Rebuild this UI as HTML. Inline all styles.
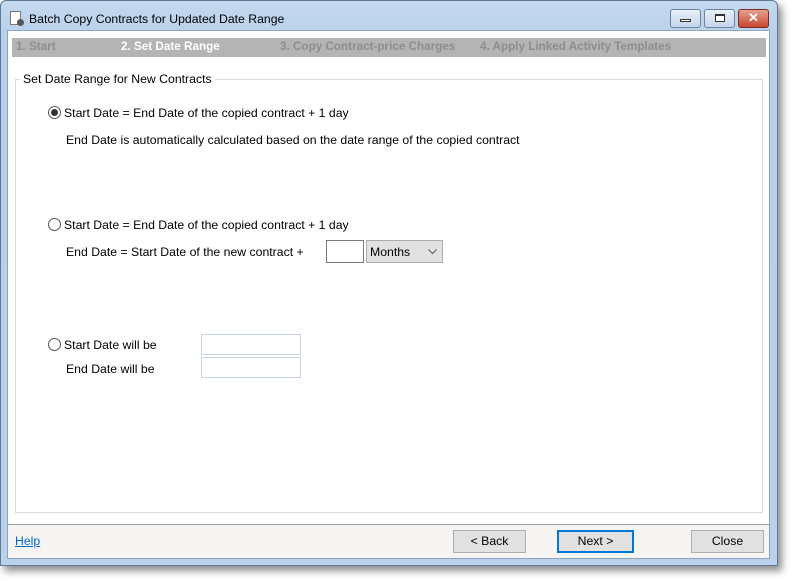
<!DOCTYPE html>
<html><head><style>
*{margin:0;padding:0;box-sizing:border-box}
body{width:795px;height:581px;background:#fff;font-family:"Liberation Sans",Arial,sans-serif;font-size:12.25px;color:#000;position:relative;overflow:hidden}
.abs{position:absolute}
.win{left:0;top:0;width:778px;height:566px;background:linear-gradient(#c5d9ef,#b6cfea 40px,#b9d1ea);border:1px solid #5e7a99;border-radius:6px 6px 0 0;box-shadow:4px 5px 8px rgba(0,0,0,.45)}
.client{left:7px;top:30px;width:763px;height:529px;background:#fff;border:1px solid #8ea5bf}
.steps{left:12px;top:38px;width:754px;height:19px;background:#b4b4b4;font-weight:bold;font-size:11.7px;color:#8d8d8d}
.steps span{position:absolute;top:2px}
.radio{width:13px;height:13px;border:1px solid #555;border-radius:50%;background:#fff}
.inp{border:1px solid #c6d3e3;background:#fff}
.btn{border:1px solid #adadad;background:#e1e1e1;text-align:center;line-height:21px;font-size:12.25px}
.wb{top:9px;height:19px;border:1px solid #6d83a0;border-radius:3px;background:linear-gradient(#e8f0f8,#c4d5ea)}
</style></head><body>
<div class="abs win"></div>
<div class="abs" style="left:10px;top:11px;width:11px;height:14px;border:1px solid #777;background:#fff"></div>
<div class="abs" style="left:17px;top:19px;width:7px;height:7px;border-radius:50%;background:#555"></div>
<div class="abs" style="left:29px;top:12px;font-size:12.25px">Batch Copy Contracts for Updated Date Range</div>
<div class="abs wb" style="left:670px;width:31px"><div class="abs" style="left:9px;top:9px;width:11px;height:3px;border:1px solid #333;background:#fff"></div></div>
<div class="abs wb" style="left:704px;width:31px"><div class="abs" style="left:10px;top:4px;width:10px;height:8px;border:1px solid #333;border-top-width:2px;background:#fff"></div></div>
<div class="abs wb" style="left:738px;width:31px;background:linear-gradient(#e8a090,#c8462f);border-color:#7a2a22;color:#fff;font-weight:bold;text-align:center;line-height:16px;font-size:13px">✕</div>
<div class="abs client"></div>
<div class="abs" style="left:8px;top:524px;width:761px;height:34px;background:#f6f5f3;border-top:1px solid #a0a0a0"></div>
<div class="abs steps">
<span style="left:4px">1. Start</span>
<span style="left:109px;color:#fff">2. Set Date Range</span>
<span style="left:268px">3. Copy Contract-price Charges</span>
<span style="left:468px">4. Apply Linked Activity Templates</span>
</div>
<div class="abs" style="left:15px;top:79px;width:748px;height:434px;border:1px solid #dcdcdc"></div>
<div class="abs" style="left:20px;top:72px;background:#fff;padding:0 3px">Set Date Range for New Contracts</div>

<div class="abs radio" style="left:48px;top:106px"><div class="abs" style="left:2px;top:2px;width:7px;height:7px;border-radius:50%;background:#333"></div></div>
<div class="abs" style="left:64px;top:106px">Start Date = End Date of the copied contract + 1 day</div>
<div class="abs" style="left:66px;top:133px">End Date is automatically calculated based on the date range of the copied contract</div>

<div class="abs radio" style="left:48px;top:218px"></div>
<div class="abs" style="left:64px;top:218px">Start Date = End Date of the copied contract + 1 day</div>
<div class="abs" style="left:66px;top:245px">End Date = Start Date of the new contract +</div>
<div class="abs" style="left:326px;top:240px;width:38px;height:23px;border:1px solid #7a7a7a;background:#fff"></div>
<div class="abs" style="left:366px;top:240px;width:77px;height:23px;border:1px solid #acacac;background:#e1e1e1;padding:4px 3px">Months
<svg class="abs" style="left:61px;top:8px" width="9" height="6"><path d="M0.5 0.5L4.5 4.5L8.5 0.5" fill="none" stroke="#555"/></svg></div>

<div class="abs radio" style="left:48px;top:338px"></div>
<div class="abs" style="left:64px;top:338px">Start Date will be</div>
<div class="abs" style="left:66px;top:362px">End Date will be</div>
<div class="abs inp" style="left:201px;top:334px;width:100px;height:21px"></div>
<div class="abs inp" style="left:201px;top:357px;width:100px;height:21px"></div>

<div class="abs" style="left:15px;top:534px;color:#0066cc;text-decoration:underline">Help</div>
<div class="abs btn" style="left:453px;top:530px;width:73px;height:23px">&lt; Back</div>
<div class="abs btn" style="left:557px;top:530px;width:77px;height:23px;border:2px solid #0078d7;line-height:19px">Next &gt;</div>
<div class="abs btn" style="left:691px;top:530px;width:73px;height:23px">Close</div>
</body></html>
